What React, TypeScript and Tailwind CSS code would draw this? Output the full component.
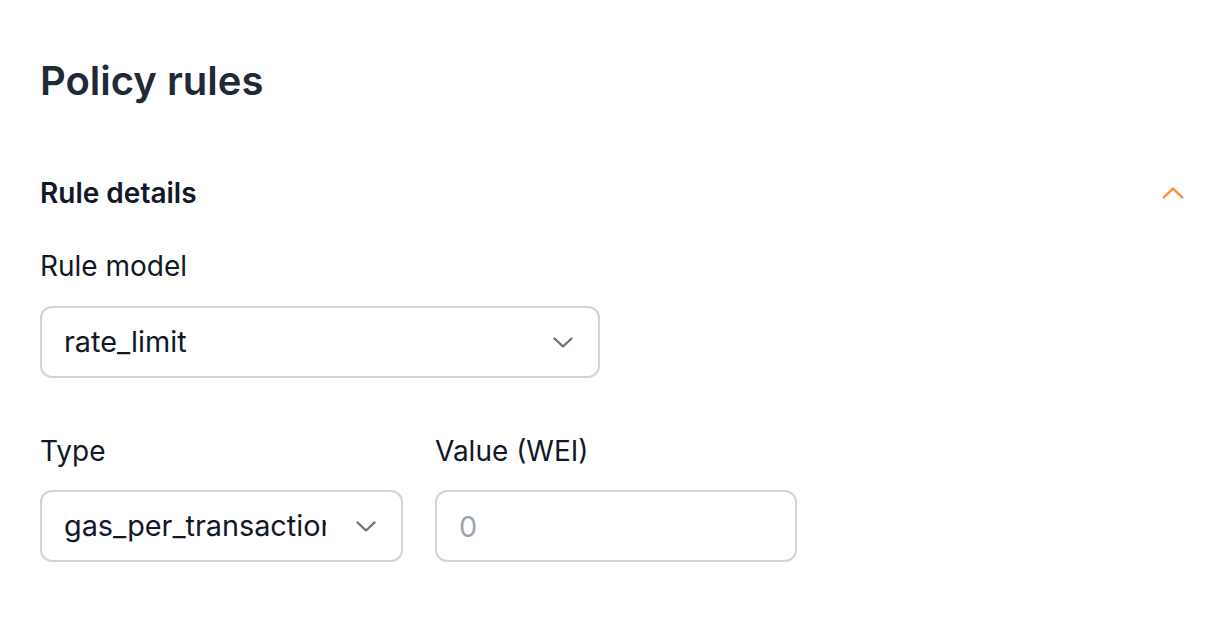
function Chevron({ up, className }: { up?: boolean; className: string }) {
  return (
    <svg viewBox="0 0 20 11" fill="none" className={className}>
      <path
        d={up ? 'M1.5 9.5 10 1.5l8.5 8' : 'M1.5 1.5 10 9.5l8.5-8'}
        stroke="currentColor"
        strokeWidth={2.4}
        strokeLinecap="round"
        strokeLinejoin="round"
      />
    </svg>
  )
}

function SelectBox({ value, width }: { value: string; width: string }) {
  return (
    <div
      className={`${width} flex h-[72px] items-center rounded-[12px] border-2 border-[#d1d5db] bg-white pl-[22px] pr-[25px]`}
    >
      <span className="flex-1 overflow-hidden whitespace-nowrap text-[28.8px] text-[#111827]">{value}</span>
      <Chevron className="ml-[30px] h-[11px] w-[20px] shrink-0 text-[#6b7280]" />
    </div>
  )
}

export default function App() {
  return (
    <div
      className="min-h-screen bg-white pl-[40px] pr-[28px] pt-[51px]"
      style={{ fontFamily: 'Inter, "Noto Sans", sans-serif' }}
    >
      <h1 className="text-[40px] font-semibold leading-[60px] text-[#1f2937]">Policy rules</h1>

      <section className="mt-[64px]">
        <div className="flex h-[36px] items-center justify-between">
          <h2 className="text-[28px] font-semibold leading-[36px] text-[#111827]">Rule details</h2>
          <Chevron up className="h-[12px] w-[22px] text-[#fb923c]" />
        </div>

        <div className="mt-[37px]">
          <label className="block text-[28px] leading-[36px] text-[#111827]">Rule model</label>
          <div className="mt-[22px]">
            <SelectBox value="rate_limit" width="w-[560px]" />
          </div>
        </div>

        <div className="mt-[55px] flex gap-[32px]">
          <div>
            <label className="block text-[28px] leading-[36px] text-[#111827]">Type</label>
            <div className="mt-[21px]">
              <SelectBox value="gas_per_transaction" width="w-[363px]" />
            </div>
          </div>
          <div>
            <label className="block text-[28px] leading-[36px] text-[#111827]">Value (WEI)</label>
            <div className="mt-[21px]">
              <input
                placeholder="0"
                className="h-[72px] w-[362px] rounded-[12px] border-2 border-[#d1d5db] bg-white px-[22px] text-[28.8px] text-[#111827] placeholder:text-[#9ca3af] focus:outline-none"
              />
            </div>
          </div>
        </div>
      </section>
    </div>
  )
}
